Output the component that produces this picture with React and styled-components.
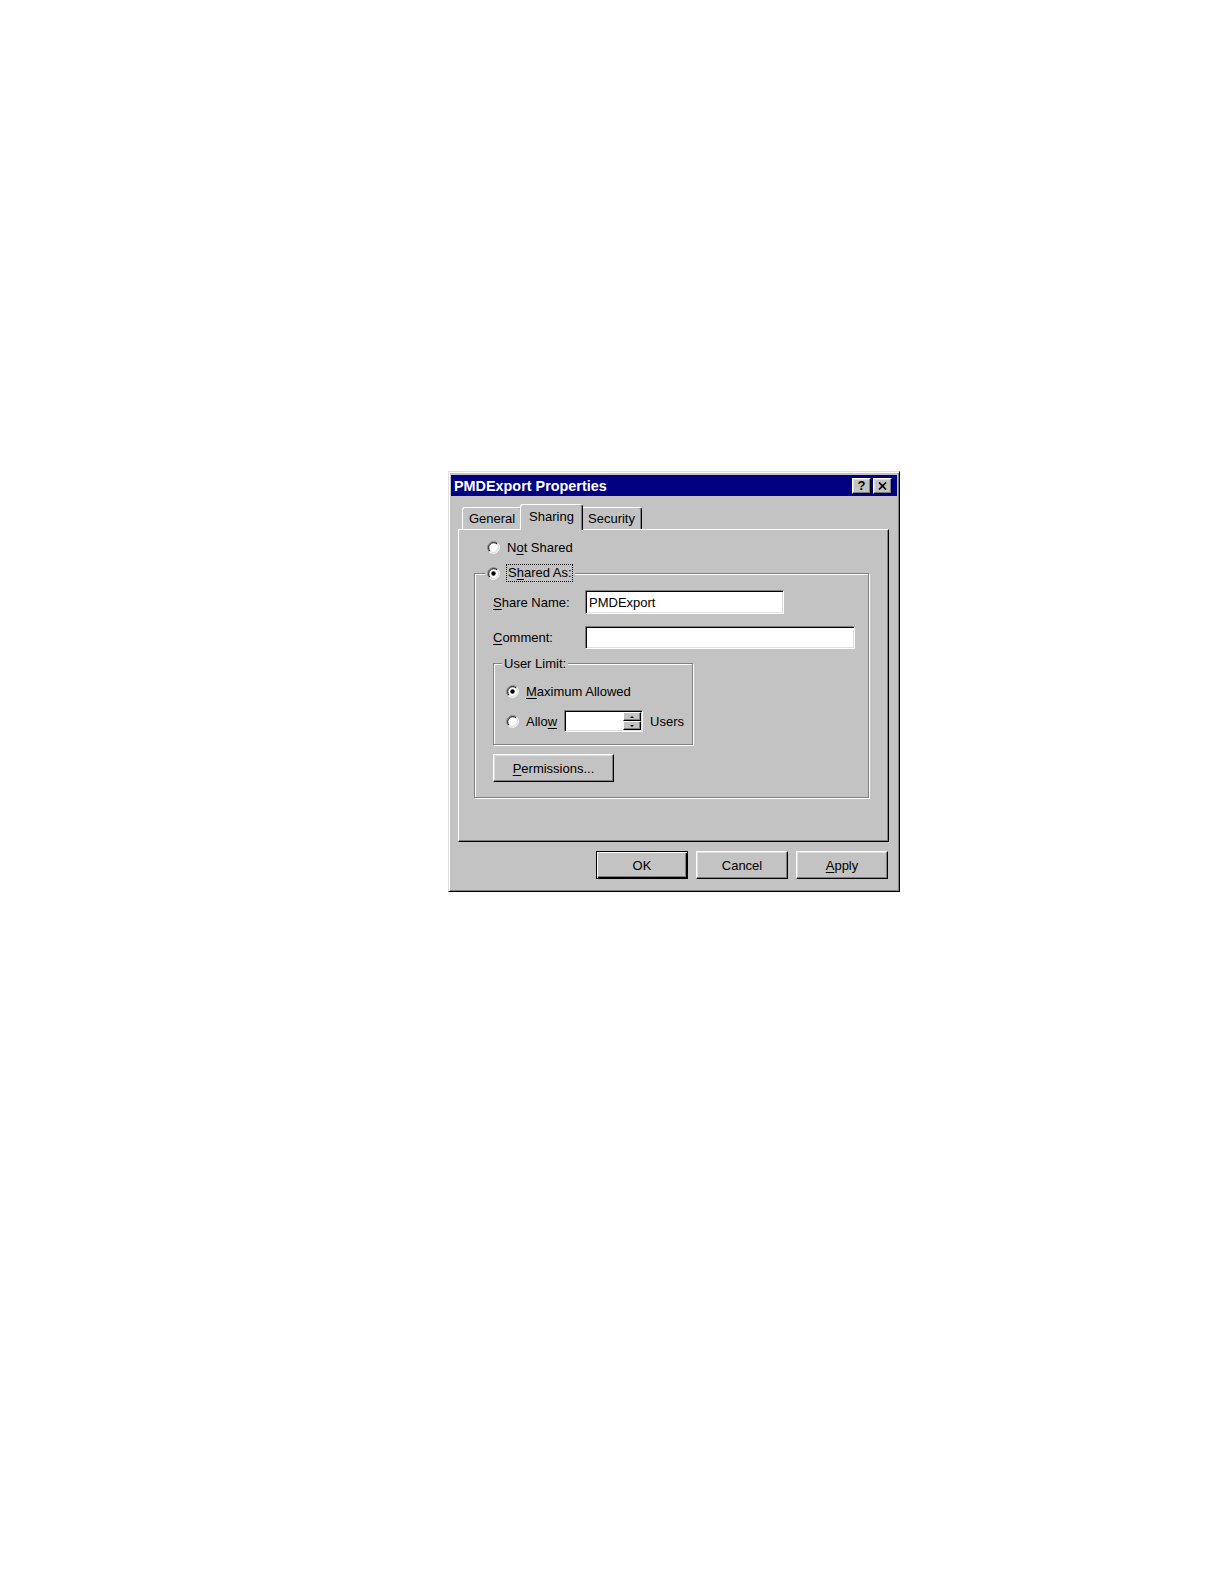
import React from 'react';
import styled, { createGlobalStyle } from 'styled-components';

const GlobalStyle = createGlobalStyle`
    html, body {
        margin: 0;
        padding: 0;
        background: #ffffff;
    }
    body {
        font-family: 'Liberation Sans', Arial, sans-serif;
        font-size: 13px;
        color: #000;
    }
`;

const FACE = '#c3c3c3';

const Page = styled.div`
    width: 1222px;
    min-height: 1584px;
    box-sizing: border-box;
    padding: 471px 0 0 448px;
`;

const Window = styled.div`
    width: 452px;
    height: 421px;
    box-sizing: border-box;
    background: ${FACE};
    border: 1px solid;
    border-color: #dfdfdf #000 #000 #dfdfdf;
    box-shadow: inset 1px 1px 0 #fff, inset -1px -1px 0 #808080;
    padding: 3px 2px 2px 2px;
    display: flex;
    flex-direction: column;
`;

const TitleBar = styled.div`
    height: 21px;
    background: #000080;
    display: flex;
    align-items: center;
    padding: 0 5px 0 3px;
`;

const Title = styled.span`
    flex: 1;
    color: #fff;
    font-weight: bold;
    font-size: 14.4px;
`;

const CaptionButton = styled.div`
    width: 19px;
    height: 16px;
    box-sizing: border-box;
    margin-left: ${p => p.$gap || 0}px;
    background: ${FACE};
    border: 1px solid;
    border-color: #fff #000 #000 #fff;
    box-shadow: inset -1px -1px 0 #808080, inset 1px 1px 0 #dfdfdf;
    display: flex;
    align-items: center;
    justify-content: center;
    font-weight: bold;
    font-size: 13px;
    line-height: 1;
`;

const Body = styled.div`
    padding: 8px 8px 0 7px;
    display: flex;
    flex-direction: column;
`;

const TabStrip = styled.div`
    display: flex;
    align-items: flex-end;
    height: 25px;
    padding-left: 4px;
    position: relative;
    z-index: 1;
`;

const Tab = styled.div`
    width: ${p => p.$width}px;
    height: ${p => (p.$active ? 26 : 22)}px;
    margin: 0 ${p => (p.$active ? -2 : 0)}px ${p => (p.$active ? -1 : 0)}px;
    box-sizing: border-box;
    background: ${FACE};
    border-top: 1px solid #fff;
    border-left: 1px solid #fff;
    border-right: 1px solid #000;
    border-radius: 3px 3px 0 0;
    box-shadow: inset -1px 0 0 #808080;
    display: flex;
    justify-content: center;
    padding-top: ${p => (p.$active ? 4 : 3)}px;
    position: relative;
    z-index: ${p => (p.$active ? 2 : 0)};
`;

const Panel = styled.div`
    height: 313px;
    box-sizing: border-box;
    border: 1px solid;
    border-color: #fff #000 #000 #fff;
    box-shadow: inset -1px -1px 0 #808080;
    padding-top: 9px;
    display: flex;
    flex-direction: column;
    align-items: flex-start;
`;

const RadioRow = styled.div`
    display: flex;
    align-items: center;
    gap: 7px;
    height: ${p => p.$height || 16}px;
    margin: ${p => p.$top || 0}px 0 0 ${p => p.$left || 0}px;
`;

const Group = styled.fieldset`
    margin: ${p => p.$top}px 0 0 ${p => p.$left}px;
    padding: 0;
    width: ${p => p.$width}px;
    box-sizing: border-box;
    min-inline-size: 0;
    border: 1px solid #808080;
    box-shadow: 1px 1px 0 #fff, inset 1px 1px 0 #fff;
`;

const Legend = styled.legend`
    margin-left: ${p => p.$left}px;
    padding: 0 2px;
    background: ${FACE};
    line-height: 15px;
`;

const LegendInner = styled.span`
    display: inline-flex;
    align-items: center;
    gap: 6px;
    vertical-align: top;
`;

const Focus = styled.span`
    border: 1px dotted #000;
    padding: 0 0 0 1px;
    line-height: 16px;
`;

const GroupBody = styled.div`
    padding: ${p => p.$pad};
    display: flex;
    flex-direction: column;
    align-items: flex-start;
`;

const FieldRow = styled.div`
    display: flex;
    align-items: center;
    margin-top: ${p => p.$top || 0}px;
`;

const Label = styled.span`
    width: 92px;
`;

const TextBox = styled.div`
    width: ${p => p.$width}px;
    height: ${p => p.$height || 23}px;
    box-sizing: border-box;
    background: #fff;
    border: 1px solid;
    border-color: #808080 #fff #fff #808080;
    box-shadow: inset 1px 1px 0 #000, inset -1px -1px 0 #dfdfdf;
    padding: 1px 2px 0 3px;
    display: flex;
    align-items: center;
    justify-content: space-between;
`;

const SpinStack = styled.div`
    width: 18px;
    height: 18px;
    display: flex;
    flex-direction: column;
    margin-right: -1px;
    margin-top: -1px;
`;

const SpinButton = styled.div`
    flex: 1;
    box-sizing: border-box;
    background: ${FACE};
    border: 1px solid;
    border-color: #fff #000 #000 #fff;
    box-shadow: inset -1px -1px 0 #808080;
    display: flex;
    align-items: center;
    justify-content: center;
    &::after {
        content: '';
        border-left: 2px solid transparent;
        border-right: 2px solid transparent;
        ${p => (p.$down ? 'border-top: 2px solid #000;' : 'border-bottom: 2px solid #000;')}
    }
`;

const Button = styled.div`
    width: ${p => p.$width}px;
    height: ${p => p.$height}px;
    margin-top: ${p => p.$top || 0}px;
    box-sizing: border-box;
    background: ${FACE};
    border: 1px solid;
    border-color: ${p => (p.$default ? '#000' : '#fff #000 #000 #fff')};
    box-shadow: ${p =>
        p.$default
            ? 'inset 1px 1px 0 #fff, inset -1px -1px 0 #000, inset -2px -2px 0 #808080'
            : 'inset -1px -1px 0 #808080, inset 1px 1px 0 #dfdfdf'};
    display: flex;
    align-items: center;
    justify-content: center;
    padding-top: 1px;
`;

const ButtonRow = styled.div`
    display: flex;
    justify-content: flex-end;
    gap: 8px;
    margin-top: 9px;
    padding-right: 1px;
`;

const U = styled.span`
    text-decoration: underline;
    text-underline-offset: 2px;
`;

const Radio = ({ checked }) => (
    <svg width="13" height="13" viewBox="0 0 13 13">
        <circle cx="6.5" cy="6.5" r="5" fill="#fff" />
        <path d="M2.26 10.74 A6 6 0 0 1 10.74 2.26" fill="none" stroke="#808080" />
        <path d="M10.74 2.26 A6 6 0 0 1 2.26 10.74" fill="none" stroke="#fff" />
        <path d="M2.97 10.03 A5 5 0 0 1 10.03 2.97" fill="none" stroke="#000" />
        <path d="M10.03 2.97 A5 5 0 0 1 2.97 10.03" fill="none" stroke="#dfdfdf" />
        {checked && <circle cx="6.5" cy="6.5" r="2.2" fill="#000" />}
    </svg>
);

const CloseGlyph = () => (
    <svg width="9" height="8" viewBox="0 0 9 8">
        <path d="M1 0.5 L8 7.5 M8 0.5 L1 7.5" stroke="#000" strokeWidth="1.7" />
    </svg>
);

const App = () => (
    <Page>
        <GlobalStyle />
        <Window>
            <TitleBar>
                <Title>PMDExport Properties</Title>
                <CaptionButton>?</CaptionButton>
                <CaptionButton $gap={2}>
                    <CloseGlyph />
                </CaptionButton>
            </TitleBar>
            <Body>
                <TabStrip>
                    <Tab $width={60}>General</Tab>
                    <Tab $width={63} $active>Sharing</Tab>
                    <Tab $width={61}>Security</Tab>
                </TabStrip>
                <Panel>
                    <RadioRow $left={28}>
                        <Radio />
                        <span>N<U>o</U>t Shared</span>
                    </RadioRow>
                    <Group $top={9} $left={15} $width={395}>
                        <Legend $left={10}>
                            <LegendInner>
                                <Radio checked />
                                <Focus>S<U>h</U>ared As:</Focus>
                            </LegendInner>
                        </Legend>
                        <GroupBody $pad="8px 0 15px 18px">
                            <FieldRow>
                                <Label><U>S</U>hare Name:</Label>
                                <TextBox $width={199} $height={24}>PMDExport</TextBox>
                            </FieldRow>
                            <FieldRow $top={12}>
                                <Label><U>C</U>omment:</Label>
                                <TextBox $width={270} />
                            </FieldRow>
                            <Group $top={7} $left={0} $width={200}>
                                <Legend $left={8}>User Limit:</Legend>
                                <GroupBody $pad="12px 0 12px 12px">
                                    <RadioRow>
                                        <Radio checked />
                                        <span><U>M</U>aximum Allowed</span>
                                    </RadioRow>
                                    <RadioRow $top={11} $height={22}>
                                        <Radio />
                                        <span>Allo<U>w</U></span>
                                        <TextBox $width={79} $height={22}>
                                            <span />
                                            <SpinStack>
                                                <SpinButton />
                                                <SpinButton $down />
                                            </SpinStack>
                                        </TextBox>
                                        <span>Users</span>
                                    </RadioRow>
                                </GroupBody>
                            </Group>
                            <Button $width={121} $height={28} $top={9}>
                                <span><U>P</U>ermissions...</span>
                            </Button>
                        </GroupBody>
                    </Group>
                </Panel>
                <ButtonRow>
                    <Button $width={92} $height={28} $default>OK</Button>
                    <Button $width={92} $height={28}>Cancel</Button>
                    <Button $width={92} $height={28}><span><U>A</U>pply</span></Button>
                </ButtonRow>
            </Body>
        </Window>
    </Page>
);

export default App;
